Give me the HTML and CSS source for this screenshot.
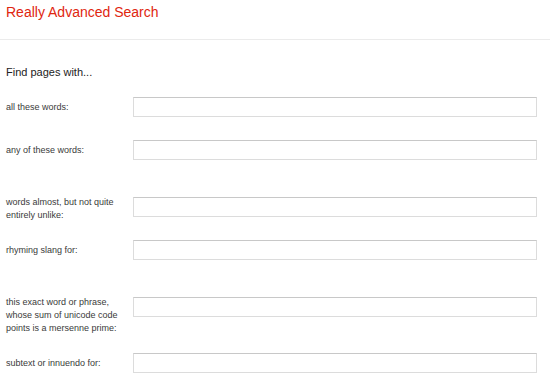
FILE: index.html
```html
<!DOCTYPE HTML>
<html lang="en">
<head>
    <meta charset="UTF-8">
    <meta name="viewport" content="width=device-width, initial-scale=1.0">
    <title>Really Advanced Search</title>
    <link rel="stylesheet" href="styles.css">
</head>
<body>
    <div class="header">
        <h1>Really Advanced Search</h1>
    </div>

    <form class="search">
        <h2>Find pages with...</h2>

        <div class="row">
            <label for="all">all these words:</label>
            <input type="text" id="all">
        </div>

        <div class="row">
            <label for="any">any of these words:</label>
            <input type="text" id="any">
        </div>

        <div class="row tall">
            <label for="unlike">words almost, but not quite entirely unlike:</label>
            <input type="text" id="unlike">
        </div>

        <div class="row">
            <label for="slang">rhyming slang for:</label>
            <input type="text" id="slang">
        </div>

        <div class="row tall">
            <label for="prime">this exact word or phrase, whose sum of unicode code points is a mersenne prime:</label>
            <input type="text" id="prime">
        </div>

        <div class="row">
            <label for="subtext">subtext or innuendo for:</label>
            <input type="text" id="subtext">
        </div>
    </form>
</body>
</html>
```

FILE: styles.css
```css
body {
    margin: 0;
    background-color: white;
    font-family: "Liberation Sans", Arial, sans-serif;
    color: #222;
}

.header {
    height: 39px;
    border-bottom: 1px solid #ebebeb;
    padding-left: 6px;
}

h1 {
    margin: 0;
    padding-top: 4px;
    font-size: 14px;
    line-height: 17px;
    font-weight: normal;
    color: #e0260f;
}

.search {
    padding-left: 6px;
}

h2 {
    margin: 26px 0 0 0;
    font-size: 11px;
    line-height: 13px;
    font-weight: normal;
    color: #222;
}

.row {
    display: flex;
    align-items: center;
    margin-top: 23px;
}

.row:first-of-type {
    margin-top: 18px;
}

.row.tall {
    align-items: flex-start;
    margin-top: 36px;
}

.tall + .row {
    margin-top: 18px;
}

label {
    width: 115px;
    margin-right: 12px;
    font-size: 9px;
    line-height: 13px;
    color: #3a3a3a;
}

input {
    box-sizing: border-box;
    width: 404px;
    height: 20px;
    margin: 0;
    padding: 0 4px;
    border: 1px solid #dcdcdc;
    border-top-color: #c8c8c8;
    font-size: 11px;
}

.row.tall input {
    margin-top: 1px;
}
```
